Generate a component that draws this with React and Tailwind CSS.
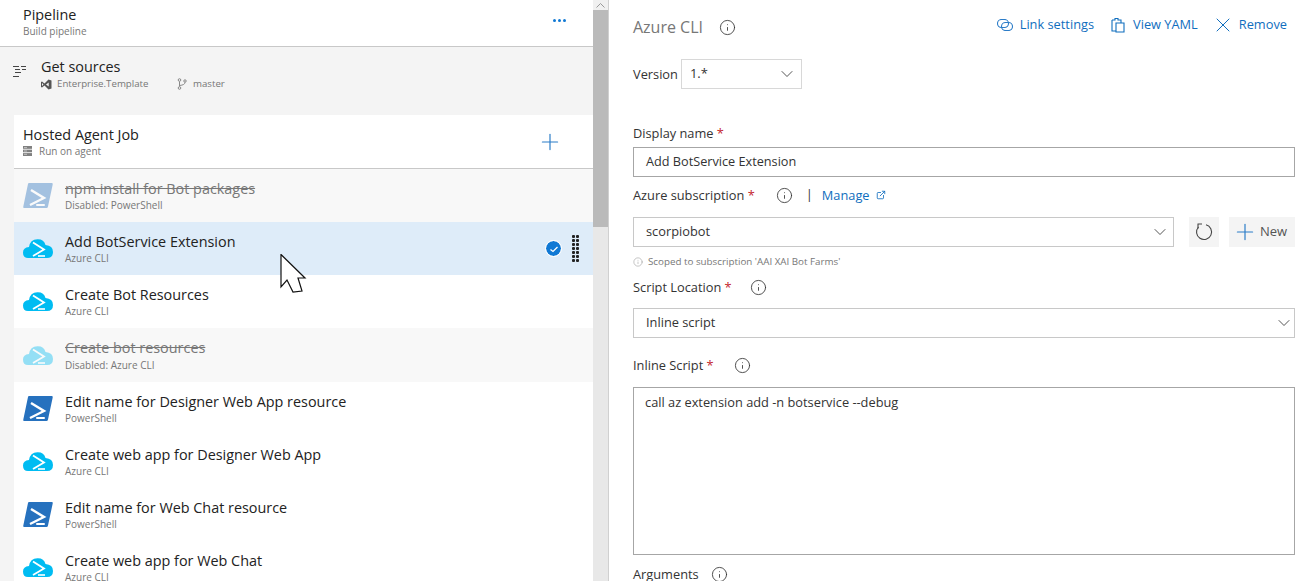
import React from "react";
import { ChevronDown, Plus, X, Info, ExternalLink } from "lucide-react";

const tasks = [
  { name: "npm install for Bot packages", sub: "Disabled: PowerShell", kind: "ps", disabled: true },
  { name: "Add BotService Extension", sub: "Azure CLI", kind: "az", selected: true },
  { name: "Create Bot Resources", sub: "Azure CLI", kind: "az" },
  { name: "Create bot resources", sub: "Disabled: Azure CLI", kind: "az", disabled: true, tall: true },
  { name: "Edit name for Designer Web App resource", sub: "PowerShell", kind: "ps" },
  { name: "Create web app for Designer Web App", sub: "Azure CLI", kind: "az" },
  { name: "Edit name for Web Chat resource", sub: "PowerShell", kind: "ps" },
  { name: "Create web app for Web Chat", sub: "Azure CLI", kind: "az" },
];

function PowerShellIcon({ faded }) {
  return (
    <svg width="30" height="25" viewBox="0 0 30 25" className={faded ? "opacity-40" : ""}>
      <path d="M6 0 L29 0 Q30 0 29.7 1.5 L25 23.5 Q24.7 25 23.5 25 L1 25 Q0 25 0.3 23.5 L5 1 Q5.2 0 6 0 Z" fill="#2671be" />
      <path d="M8 7 L21 15 L7 22" fill="none" stroke="#fff" strokeWidth="2.4" />
      <path d="M14 22 H21" stroke="#fff" strokeWidth="2" strokeLinecap="round" />
    </svg>
  );
}

function AzureCliIcon({ faded }) {
  return (
    <svg width="30" height="19" viewBox="0 0 30 19" className={faded ? "opacity-40" : ""}>
      <path d="M5 19 Q0 19 0 13.5 Q0 8.5 6 8 Q7 0.5 14.5 0.2 Q21 0 22.5 6 Q30 6.5 30 13 Q30 19 24 19 Z" fill="#00bcf2" />
      <path d="M10 3.5 L21 10.5 L10 17" fill="none" stroke="#fff" strokeWidth="1.8" />
      <path d="M15 17 H22" stroke="#fff" strokeWidth="1.6" />
    </svg>
  );
}

function TaskRow({ task }) {
  const bg = task.selected ? "bg-[#deecf9]" : task.disabled ? "bg-[#f8f8f8]" : "bg-white";
  return (
    <div className={`flex shrink-0 items-center pl-[9px] pr-[14px] ${task.tall ? "h-[54px]" : "h-[53px]"} ${bg}`}>
      <div className="flex w-[42px] shrink-0 items-center">
        {task.kind === "ps" ? <PowerShellIcon faded={task.disabled} /> : <AzureCliIcon faded={task.disabled} />}
      </div>
      <div className="min-w-0 flex-1">
        <div className={`text-[14.4px] leading-[19px] ${task.disabled ? "text-[#777] line-through" : "text-[#222]"}`}>{task.name}</div>
        <div className={`text-[10px] leading-[14px] text-[#777] ${task.tall ? "mt-[1px]" : ""}`}>{task.sub}</div>
      </div>
      {task.selected && (
        <div className="flex items-center gap-[11px]">
          <div className="flex h-[15px] w-[15px] items-center justify-center rounded-full bg-[#0f78d4] outline outline-1 outline-white">
            <svg width="10" height="8" viewBox="0 0 10 8"><path d="M1.5 4.5 L4 6.5 L8.5 2" fill="none" stroke="#fff" strokeWidth="1.3" /></svg>
          </div>
          <div className="grid grid-cols-2 gap-[1px]">
            {Array.from({ length: 14 }).map((_, i) => (
              <span key={i} className="h-[3px] w-[3px] rounded-[1px] bg-[#222]" />
            ))}
          </div>
        </div>
      )}
    </div>
  );
}

function Label({ children, required }) {
  return (
    <span className="text-[12.8px] leading-[18px] text-[#333]">
      {children}
      {required && <span className="text-[#c4262e]"> *</span>}
    </span>
  );
}

function InfoIcon({ className = "" }) {
  return (
    <span className={`flex w-[15px] justify-center ${className}`}>
      <Info size={17} strokeWidth={1.2} className="shrink-0 text-[#333]" />
    </span>
  );
}

export default function App() {
  return (
    <div className="relative flex h-[581px] w-[1309px] overflow-hidden bg-white font-['Open_Sans',sans-serif]">
      {/* left column */}
      <div className="flex w-[593px] shrink-0 flex-col bg-[#f4f4f4]">
        <div className="flex h-[47px] shrink-0 items-center justify-between border-b border-[#c8c8c8] bg-white pl-[23px] pr-[27px]">
          <div className="pb-[3px]">
            <div className="text-[14.4px] leading-[18px] text-[#222]">Pipeline</div>
            <div className="text-[10px] leading-[14px] text-[#777]">Build pipeline</div>
          </div>
          <div className="-mt-[5px] flex gap-[2px]">
            <span className="h-[3px] w-[3px] rounded-full bg-[#0f78d4]" />
            <span className="h-[3px] w-[3px] rounded-full bg-[#0f78d4]" />
            <span className="h-[3px] w-[3px] rounded-full bg-[#0f78d4]" />
          </div>
        </div>

        <div className="flex h-[68px] shrink-0 pl-[13px] pt-[10px]">
          <svg width="14" height="14" viewBox="0 0 14 14" className="mt-[8px]">
            <path d="M0 1.5 H6 M8 1.5 H13 M2 4.5 H7 M9 4.5 H13 M2 7.5 H8 M0 11.5 H6" stroke="#444" strokeWidth="1" />
          </svg>
          <div className="ml-[14px]">
            <div className="text-[14.4px] leading-[19px] text-[#222]">Get sources</div>
            <div className="mt-[1px] flex items-center text-[9.7px] leading-[14px] text-[#777]">
              <svg width="11" height="11" viewBox="0 0 11 11"><path d="M0 3 L1 2.5 L3.5 4.5 L7.5 0.5 L10.5 1.5 V9.5 L7.5 10.5 L3.5 6.5 L1 8.5 L0 8 Z" fill="#555" /><path d="M7.7 3.5 V7.5 L5 5.5 Z M1 4 V7 L2.5 5.5 Z" fill="#f4f4f4" /></svg>
              <span className="ml-[5px] w-[120px]">Enterprise.Template</span>
              <svg width="10" height="12" viewBox="0 0 10 12"><circle cx="2.5" cy="2" r="1.3" fill="none" stroke="#888" /><circle cx="2.5" cy="10" r="1.3" fill="none" stroke="#888" /><circle cx="8" cy="3" r="1.2" fill="none" stroke="#888" /><path d="M2.5 3.5 V8.5 M2.5 7.5 Q8 7 8 4.3" fill="none" stroke="#888" /></svg>
              <span className="ml-[6px]">master</span>
            </div>
          </div>
        </div>

        <div className="ml-[14px] flex min-h-0 flex-1 flex-col">
          <div className="flex h-[54px] shrink-0 items-center justify-between border-b border-[#c8c8c8] bg-white pl-[9px] pr-[30px]">
            <div className="pb-[1px]">
              <div className="text-[14.4px] leading-[19px] text-[#222]">Hosted Agent Job</div>
              <div className="flex items-center gap-[7px] text-[10px] leading-[14px] text-[#777]">
                <svg width="9" height="10" viewBox="0 0 9 10"><path d="M0 0 H9 V10 H0 Z" fill="#808080" /><path d="M0 3.3 H9 M0 6.6 H9" stroke="#fff" strokeWidth="0.8" /><path d="M1 1.6 H4 M1 5 H4 M1 8.3 H4" stroke="#ddd" strokeWidth="0.7" /></svg>
                Run on agent
              </div>
            </div>
            <Plus size={26} strokeWidth={1.1} className="text-[#2b7cc8]" />
          </div>
          {tasks.map((task) => (
            <TaskRow key={task.name} task={task} />
          ))}
        </div>
      </div>

      {/* scrollbar */}
      <div className="flex w-[16px] shrink-0 flex-col border-r border-[#d0d0d0] bg-[#e8e8e8]">
        <div className="flex h-[10px] items-center justify-center bg-[#f0f0f0]">
          <svg width="9" height="5" viewBox="0 0 9 5"><path d="M0.5 4.5 L4.5 0.5 L8.5 4.5" fill="none" stroke="#999" /></svg>
        </div>
        <div className="h-[217px] bg-[#bababa]" />
      </div>

      {/* task editor */}
      <div className="min-w-0 flex-1 pl-[24px] pr-[14px]">
        <div className="flex h-[50px] items-center justify-between pr-[8px] pt-[4px]">
          <div className="flex items-center gap-[17px]">
            <span className="text-[16px] text-[#777]">Azure CLI</span>
            <InfoIcon />
          </div>
          <div className="-mt-[5px] flex items-center text-[12.8px] text-[#106ebe]">
            <svg width="16" height="12" viewBox="0 0 16 12" fill="none" stroke="#2b7cc8" strokeWidth="1.1">
              <rect x="0.5" y="0.5" width="11" height="8" rx="4" />
              <rect x="4.5" y="3.5" width="11" height="8" rx="4" />
            </svg>
            <span className="ml-[7px]">Link settings</span>
            <svg width="14" height="16" viewBox="0 0 14 16" className="ml-[17px]"><path d="M1 3 H4 V1.5 H7 V3 H10 V6 M1 3 V14 H5 M5 6 H13 V15 H5 Z" fill="none" stroke="#106ebe" strokeWidth="1.1" /></svg>
            <span className="ml-[8px]">View YAML</span>
            <X size={24} strokeWidth={1} className="ml-[13px]" />
            <span className="ml-[4px]">Remove</span>
          </div>
        </div>

        <div className="mt-[9px] flex items-center">
          <span className="pb-[2px]"><Label>Version</Label></span>
          <div className="ml-[3px] flex h-[30px] w-[121px] items-center justify-between border border-[#d8d8d8] pl-[8px] pr-[4px] text-[13px] text-[#333]">
            1.*
            <ChevronDown size={20} strokeWidth={1} />
          </div>
        </div>

        <div className="mt-[31px]"><Label required>Display name</Label></div>
        <div className="mt-[3px] flex h-[30px] items-center border border-[#a6a6a6] pl-[12px] text-[12.7px] text-[#333]">Add BotService Extension</div>

        <div className="mt-[8px] flex h-[20px] items-center">
          <Label required>Azure subscription</Label>
          <InfoIcon className="ml-[22px]" />
          <span className="ml-[14px] text-[13px] text-[#333]">|</span>
          <span className="ml-[9px] pt-[1px] text-[12.8px] text-[#106ebe]">Manage</span>
          <ExternalLink size={10} className="ml-[6px] text-[#106ebe]" />
        </div>
        <div className="mt-[12px] flex items-center">
          <div className="flex h-[30px] w-[541px] items-center justify-between border border-[#c8c8c8] pl-[12px] pr-[3px] text-[12.8px] text-[#333]">
            scorpiobot
            <ChevronDown size={20} strokeWidth={1} />
          </div>
          <button className="ml-[15px] flex h-[30px] w-[30px] items-center justify-center bg-[#f4f4f4]">
            <svg width="18" height="18" viewBox="0 0 18 18" fill="none" stroke="#444" strokeWidth="1.1">
              <path d="M11 1.8 A7.5 7.5 0 1 1 3.5 4" />
              <path d="M2.5 1 H7 M3 1 V5.5" />
            </svg>
          </button>
          <button className="ml-[10px] flex h-[30px] w-[66px] items-center justify-start gap-[2px] bg-[#f4f4f4] pl-[3px] text-[13px] text-[#555]">
            <Plus size={26} strokeWidth={1.1} className="text-[#2b7cc8]" />
            New
          </button>
        </div>
        <div className="mt-[8px] flex items-center gap-[5px] text-[9.8px] leading-[14px] text-[#777]">
          <Info size={10} strokeWidth={1} />
          Scoped to subscription 'AAI XAI Bot Farms'
        </div>

        <div className="mt-[8px] flex h-[20px] items-center">
          <Label required>Script Location</Label>
          <InfoIcon className="ml-[19px]" />
        </div>
        <div className="mt-[11px] flex h-[30px] items-center justify-between border border-[#c8c8c8] pl-[12px] text-[12.8px] text-[#333]">
          Inline script
          <ChevronDown size={20} strokeWidth={1} />
        </div>

        <div className="mt-[17px] flex h-[20px] items-center">
          <Label required>Inline Script</Label>
          <InfoIcon className="ml-[21px]" />
        </div>
        <div className="mt-[12px] h-[168px] border border-[#a6a6a6] pl-[11px] pt-[5px] text-[12.8px] leading-[18px] text-[#333]">
          call az extension add -n botservice --debug
        </div>
        <div className="mt-[9px] flex h-[20px] items-center">
          <Label>Arguments</Label>
          <InfoIcon className="ml-[13px]" />
        </div>
      </div>

      {/* mouse pointer over the list */}
      <svg width="27" height="40" viewBox="0 0 27 40" className="absolute left-[280px] top-[254px]">
        <path d="M1 0.5 L25 24 L18 24 L22 37 L13 38 L7 26 L1 33 Z" fill="#fff" stroke="#111" strokeWidth="1.2" />
      </svg>
    </div>
  );
}
